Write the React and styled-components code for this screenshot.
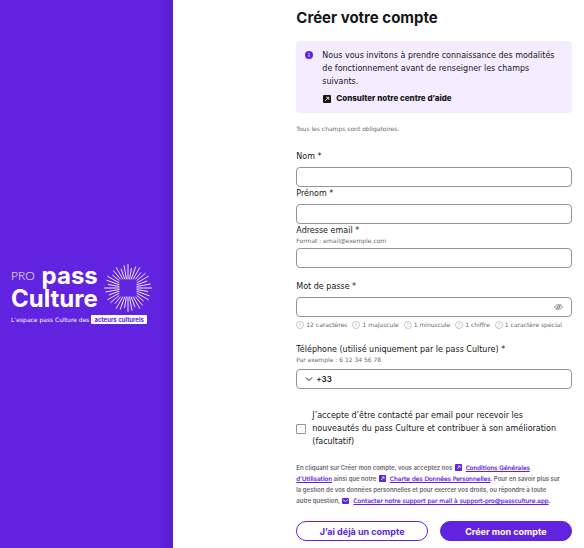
import React, { useState } from "react";
import styled, { createGlobalStyle } from "styled-components";

const criteria = [
  "12 caractères",
  "1 majuscule",
  "1 minuscule",
  "1 chiffre",
  "1 caractère spécial",
];

//rays of the logo, each one starts on the edge of a small square...
const rays = Array.from({ length: 36 }, (_, i) => {
  const angle = (i * Math.PI) / 18;
  const x = Math.cos(angle);
  const y = Math.sin(angle);
  const start = 9 / Math.max(Math.abs(x), Math.abs(y));
  const end = [23.5, 20, 22.5][i % 3];
  return [x * start, y * start, x * end, y * end];
});

const Burst = () => (
  <svg width="48" height="48" viewBox="-24 -24 48 48" aria-hidden="true">
    {rays.map(([x1, y1, x2, y2], i) => (
      <line
        key={i}
        x1={x1}
        y1={y1}
        x2={x2}
        y2={y2}
        stroke="#fff"
        strokeWidth="0.9"
        strokeLinecap="round"
      />
    ))}
  </svg>
);

const LinkIcon = ({ size = 8 }) => (
  <svg width={size} height={size} viewBox="0 0 16 16" aria-hidden="true">
    <rect width="16" height="16" rx="2" fill="currentColor" />
    <path d="M4.5 11.5L11 5M6.5 4.5h5v5" fill="none" stroke="#fff" strokeWidth="1.7" />
  </svg>
);

const MailIcon = () => (
  <svg width="7" height="6" viewBox="0 0 14 12" aria-hidden="true">
    <rect width="14" height="12" rx="2" fill="currentColor" />
    <path d="M2 3l5 4 5-4" fill="none" stroke="#fff" strokeWidth="1.5" />
  </svg>
);

const InfoIcon = () => (
  <svg width="8" height="8" viewBox="0 0 16 16" aria-hidden="true">
    <circle cx="8" cy="8" r="8" fill="#6123df" />
    <path d="M8 7v5M8 3.5v2" stroke="#fff" strokeWidth="1.8" />
  </svg>
);

const EyeIcon = () => (
  <svg width="9" height="8" viewBox="0 0 20 16" fill="none" stroke="#5a5b62" strokeWidth="1.4">
    <path d="M1 8c5-7 13-7 18 0-5 7-13 7-18 0z" />
    <circle cx="10" cy="8" r="3" />
    <path d="M4 14L16 2" />
  </svg>
);

const CriterionIcon = () => (
  <svg width="8" height="8" viewBox="0 0 16 16" fill="none" stroke="#a0a1a8" aria-hidden="true">
    <circle cx="8" cy="8" r="7" strokeWidth="1.2" />
    <path d="M8 4v5M8 10.5v1.5" strokeWidth="1.2" />
  </svg>
);

export default function App() {
  const [showPassword, setShowPassword] = useState(false);

  return (
    <>
      <GlobalStyle />
      <Page>
        <Side>
          <Logo>
            <Brand>
              <BrandRow>
                <Pro>PRO</Pro>
                <span>pass</span>
              </BrandRow>
              <span>Culture</span>
            </Brand>
            <Burst />
            <Tagline>
              <span>L’espace pass Culture des</span>
              <strong>acteurs culturels</strong>
            </Tagline>
          </Logo>
        </Side>
        <Content>
          <Title>Créer votre compte</Title>
          <Banner>
            <InfoIcon />
            <div>
              <p>
                Nous vous invitons à prendre connaissance des modalités de
                fonctionnement avant de renseigner les champs suivants.
              </p>
              <HelpLink href="#aide">
                <LinkIcon />
                Consulter notre centre d’aide
              </HelpLink>
            </div>
          </Banner>
          <Mandatory>Tous les champs sont obligatoires.</Mandatory>
          <form onSubmit={(e) => e.preventDefault()}>
            <Field>
              <Label htmlFor="lastName">Nom *</Label>
              <Control>
                <input id="lastName" type="text" />
              </Control>
            </Field>
            <Field>
              <Label htmlFor="firstName">Prénom *</Label>
              <Control>
                <input id="firstName" type="text" />
              </Control>
            </Field>
            <Field>
              <Label htmlFor="email" $withHint>Adresse email *</Label>
              <Hint>Format : email@exemple.com</Hint>
              <Control>
                <input id="email" type="email" />
              </Control>
            </Field>
            <Field $space="12px">
              <Label htmlFor="password">Mot de passe *</Label>
              <Control>
                <input id="password" type={showPassword ? "text" : "password"} />
                <button
                  type="button"
                  aria-label="Afficher le mot de passe"
                  onClick={() => setShowPassword(!showPassword)}
                >
                  <EyeIcon />
                </button>
              </Control>
              <Criteria>
                {criteria.map((text) => (
                  <li key={text}>
                    <CriterionIcon />
                    {text}
                  </li>
                ))}
              </Criteria>
            </Field>
            <Field $space="14px">
              <Label htmlFor="phone" $withHint>
                Téléphone (utilisé uniquement par le pass Culture) *
              </Label>
              <Hint $tall>Par exemple : 6 12 34 56 78</Hint>
              <Control>
                <Chevron width="8" height="6" viewBox="0 0 8 6" aria-hidden="true">
                  <path d="M1 1.5l3 3 3-3" fill="none" stroke="#161617" />
                </Chevron>
                <Country aria-label="Indicatif téléphonique">
                  <option>+33</option>
                </Country>
                <input id="phone" type="tel" />
              </Control>
            </Field>
            <Consent>
              <input type="checkbox" />
              <span>
                J’accepte d’être contacté par email pour recevoir les nouveautés
                du pass Culture et contribuer à son amélioration (facultatif)
              </span>
            </Consent>
            <Legal>
              En cliquant sur Créer mon compte, vous acceptez nos{" "}
              <a href="#cgu">
                <LinkIcon size={7} /> <u>Conditions Générales<br />d’Utilisation</u>
              </a>{" "}
              ainsi que notre{" "}
              <a href="#charte">
                <LinkIcon size={7} /> <u>Charte des Données Personnelles</u>
              </a>
              . Pour en savoir plus sur
              <br />
              la gestion de vos données personnelles et pour exercer vos droits,
              ou répondre à toute
              <br />
              autre question,{" "}
              <a href="mailto:support-pro@passculture.app">
                <MailIcon />{" "}
                <u>Contacter notre support par mail à support-pro@passculture.app</u>
              </a>
              .
            </Legal>
            <Actions>
              <Button type="button">J’ai déjà un compte</Button>
              <Button type="submit" $primary>Créer mon compte</Button>
            </Actions>
          </form>
        </Content>
      </Page>
    </>
  );
}

//styling of the page here....
const GlobalStyle = createGlobalStyle`
  * {
    box-sizing: border-box;
  }
  body {
    margin: 0;
    background: #fff;
    color: #161617;
    font-family: "DejaVu Sans", sans-serif;
    font-size: 8px;
    line-height: 13px;
  }
  p, h1, ul {
    margin: 0;
    padding: 0;
  }
  input, button, select {
    font: inherit;
    color: inherit;
  }
  svg {
    flex-shrink: 0;
  }
`;

const Page = styled.div`
  display: grid;
  grid-template-columns: 173fr 411fr;
  min-height: 100vh;
`;

const Side = styled.aside`
  display: flex;
  align-items: center;
  padding: 40px 11px 0;
  background: linear-gradient(to right, #6123df 92%, #571fc9);
`;

const Logo = styled.div`
  display: grid;
  grid-template-columns: auto auto;
  justify-content: start;
  column-gap: 6px;
  color: #fff;
`;

const Brand = styled.div`
  display: flex;
  flex-direction: column;
  font-family: Inter, sans-serif;
  font-size: 24px;
  font-weight: 700;
  line-height: 23px;
`;

const BrandRow = styled.div`
  display: flex;
  justify-content: space-between;
  align-items: center;
`;

const Pro = styled.span`
  font-family: Lato, sans-serif;
  font-size: 12px;
  font-weight: 300;
  line-height: 12px;
`;

const Tagline = styled.p`
  grid-column: 1 / -1;
  display: flex;
  gap: 2px;
  width: 0;
  margin-top: 3px;
  font-size: 6px;
  line-height: 9px;
  white-space: nowrap;
  strong {
    padding: 0 3px;
    border-radius: 1px;
    background: #fff;
    color: #6123df;
    font-family: Inter, sans-serif;
  }
`;

const Content = styled.main`
  padding: 8px 3% 7px 30%;
`;

const Title = styled.h1`
  margin-bottom: 13px;
  font-family: Inter, sans-serif;
  font-size: 15px;
  font-weight: 700;
  line-height: 20px;
`;

const Banner = styled.section`
  display: flex;
  gap: 9px;
  padding: 8px 9px;
  border-radius: 4px;
  background: #f4edff;
  > svg {
    margin-top: 2px;
  }
`;

const HelpLink = styled.a`
  display: flex;
  align-items: center;
  gap: 5px;
  margin: 4px 0 0 1px;
  color: #161617;
  font-family: Inter, sans-serif;
  font-weight: 800;
  text-decoration: none;
`;

const Mandatory = styled.p`
  margin: 12px 0 17px;
  color: #696a6f;
  font-size: 6px;
  line-height: 8px;
`;

const Field = styled.div`
  margin-top: ${(props) => props.$space || "0"};
`;

const Label = styled.label`
  display: block;
  padding-bottom: ${(props) => (props.$withHint ? "0" : "4px")};
`;

const Hint = styled.p`
  padding-bottom: ${(props) => (props.$tall ? "5px" : "3px")};
  color: #696a6f;
  font-size: 6px;
  line-height: 8px;
`;

const Control = styled.div`
  display: flex;
  align-items: center;
  height: 20px;
  padding: 0 8px;
  border: 1px solid #90949d;
  border-radius: 4px;
  input {
    flex: 1;
    min-width: 0;
    padding: 0;
    border: 0;
    outline: 0;
    background: none;
  }
  button {
    display: flex;
    padding: 0;
    border: 0;
    background: none;
    cursor: pointer;
  }
`;

const Chevron = styled.svg`
  margin-right: 3px;
`;

const Country = styled.select`
  appearance: none;
  padding: 0;
  border: 0;
  background: none;
  font-family: Inter, sans-serif;
  font-weight: 600;
`;

const Criteria = styled.ul`
  display: flex;
  gap: 5px;
  padding-top: 4px;
  list-style: none;
  color: #696a6f;
  font-size: 6px;
  line-height: 8px;
  white-space: nowrap;
  li {
    display: flex;
    gap: 2px;
  }
`;

const Consent = styled.label`
  display: flex;
  align-items: center;
  gap: 6px;
  margin-top: 20px;
  input {
    appearance: none;
    flex-shrink: 0;
    width: 10px;
    height: 10px;
    margin: 0;
    border: 1px solid #90949d;
    border-radius: 1px;
    &:checked {
      background: #6123df;
    }
  }
`;

const Legal = styled.p`
  margin-top: 14px;
  color: #696a6f;
  font-family: Inter, sans-serif;
  font-size: 6px;
  font-weight: 600;
  line-height: 11px;
  a {
    color: #6123df;
    font-family: "DejaVu Sans", sans-serif;
    font-weight: 400;
    text-decoration: none;
    -webkit-text-stroke: 0.2px;
  }
  u {
    text-underline-offset: 1px;
  }
  svg {
    margin: 0 2px 0 1px;
    vertical-align: -1px;
  }
`;

const Actions = styled.div`
  display: grid;
  grid-template-columns: 1fr 1fr;
  gap: 12px;
  margin-top: 15px;
`;

const Button = styled.button`
  height: 20px;
  padding: 0;
  border: 1px solid #6123df;
  border-radius: 10px;
  background: ${(props) => (props.$primary ? "#6123df" : "#fff")};
  color: ${(props) => (props.$primary ? "#fff" : "#6123df")};
  font-family: Inter, sans-serif;
  font-size: 9px;
  font-weight: 700;
  cursor: pointer;
`;
